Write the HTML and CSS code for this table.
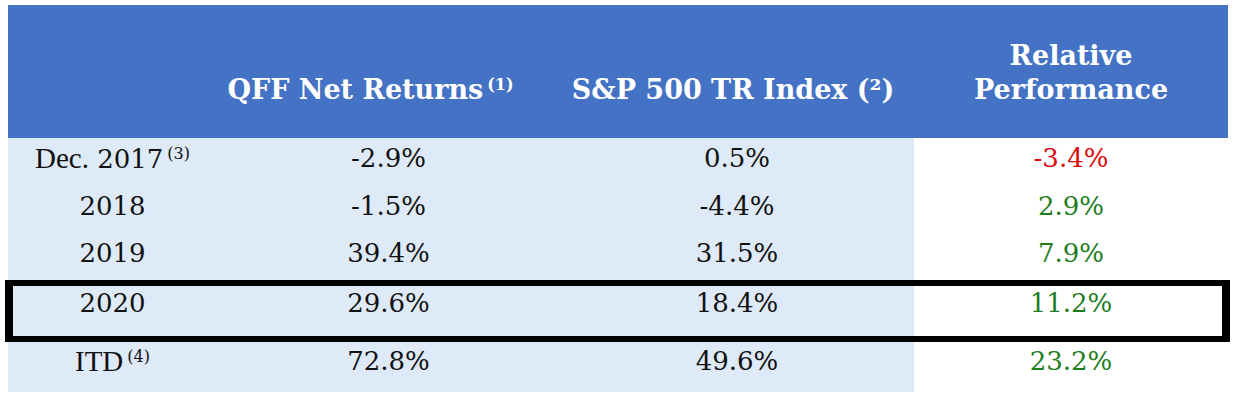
FILE: index.html
```html
<!DOCTYPE html>
<html lang="en">
<head>
<meta charset="utf-8">
<title>QFF Performance</title>
<link rel="stylesheet" href="styles.css">
</head>
<body>
<div class="wrap">
  <div class="table">
    <div class="row head">
      <div class="cell c1"></div>
      <div class="cell c2"><span>QFF Net Returns<sup class="hs">(1)</sup></span></div>
      <div class="cell c3"><span>S&amp;P 500 TR Index (²)</span></div>
      <div class="cell c4"><span>Relative<br>Performance</span></div>
    </div>
    <div class="row r1">
      <div class="cell c1"><span class="lbl">Dec.</span> 2017<sup class="bs">(3)</sup></div>
      <div class="cell c2">-2.9%</div>
      <div class="cell c3">0.5%</div>
      <div class="cell c4 neg">-3.4%</div>
    </div>
    <div class="row r2">
      <div class="cell c1">2018</div>
      <div class="cell c2">-1.5%</div>
      <div class="cell c3">-4.4%</div>
      <div class="cell c4 pos">2.9%</div>
    </div>
    <div class="row r3">
      <div class="cell c1">2019</div>
      <div class="cell c2">39.4%</div>
      <div class="cell c3">31.5%</div>
      <div class="cell c4 pos">7.9%</div>
    </div>
    <div class="row r4 boxed">
      <div class="cell c1">2020</div>
      <div class="cell c2">29.6%</div>
      <div class="cell c3">18.4%</div>
      <div class="cell c4 pos">11.2%</div>
    </div>
    <div class="row r5">
      <div class="cell c1"><span class="lbl">ITD</span><sup class="bs">(4)</sup></div>
      <div class="cell c2">72.8%</div>
      <div class="cell c3">49.6%</div>
      <div class="cell c4 pos">23.2%</div>
    </div>
  </div>
</div>
</body>
</html>
```

FILE: styles.css
```css
html, body {
  margin: 0;
  padding: 0;
  background: #ffffff;
}

.wrap {
  padding: 5px 5px 0 8px;
}

.table {
  width: 1220px;
  font-family: "DejaVu Serif", "Liberation Serif", serif;
  color: #111111;
}

.row {
  display: grid;
  grid-template-columns: 209px 343px 354px 314px;
}

.cell {
  text-align: center;
  font-size: 26px;
  line-height: 30px;
  background: #deeaf7;
  white-space: nowrap;
}

.cell.c4 {
  background: #ffffff;
}

.head {
  height: 133px;
}

.head .cell {
  background: #4472c4;
  color: #ffffff;
  font-weight: bold;
  font-size: 27px;
  line-height: 34px;
  display: flex;
  align-items: flex-end;
  justify-content: center;
  padding-bottom: 31px;
  box-sizing: border-box;
}

.head .cell.c2 {
  padding-right: 36px;
}

.head .cell.c3 {
  padding-right: 8px;
}

.hs {
  font-size: 16px;
  font-weight: bold;
  vertical-align: 9px;
  line-height: 0;
  margin-left: 4px;
}

.bs {
  font-size: 16px;
  vertical-align: 9px;
  line-height: 0;
  margin-left: 4px;
}

.lbl {
  font-family: "Liberation Serif", serif;
  font-size: 29px;
}

.r1 .cell, .r2 .cell, .r3 .cell {
  padding-top: 5px;
  box-sizing: border-box;
}

.r1 { height: 48px; }
.r2 { height: 47px; }
.r3 { height: 47px; }

.r4 {
  height: 62px;
}

.r4 .cell {
  padding-top: 8px;
  box-sizing: border-box;
}

.r5 {
  height: 50px;
}

.r5 .cell {
  padding-top: 4px;
  box-sizing: border-box;
}

.neg {
  color: #dd0a0a;
}

.pos {
  color: #1e7d1e;
}

.boxed {
  position: relative;
}

.boxed::after {
  content: "";
  position: absolute;
  top: 0;
  bottom: 0;
  left: -3px;
  right: -2px;
  border-style: solid;
  border-color: #000000;
  border-width: 6px 8px;
  pointer-events: none;
}
```
